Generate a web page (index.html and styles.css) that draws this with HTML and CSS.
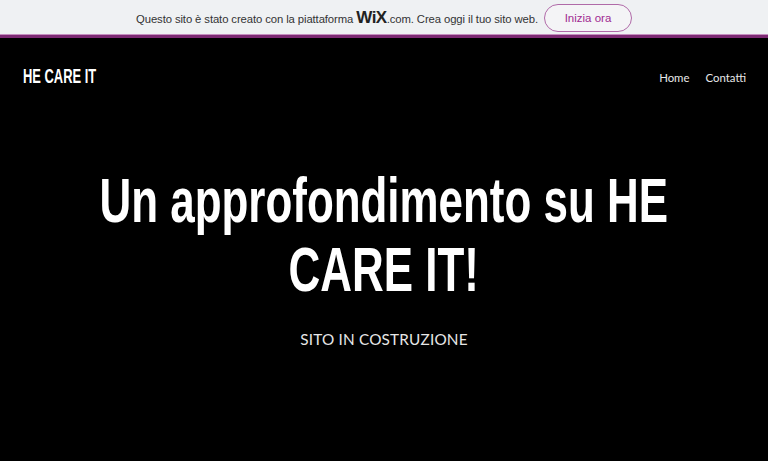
FILE: index.html
```html
<!DOCTYPE html>
<html lang="it">
<head>
<meta charset="utf-8">
<title>HE CARE IT</title>
<link rel="stylesheet" href="styles.css">
</head>
<body>
<div class="wixbar">
  <span class="wixtext">Questo sito è stato creato con la piattaforma <span class="wixlogo">WiX</span>.com. Crea oggi il tuo sito web.</span>
  <a class="wixbtn" href="#">Inizia ora</a>
</div>
<header class="site-header">
  <div class="logo">HE CARE IT</div>
  <nav class="nav">
    <a href="#">Home</a>
    <a href="#">Contatti</a>
  </nav>
</header>
<main class="hero">
  <h1 class="title"><span class="title-inner">Un approfondimento su HE<br>CARE IT!</span></h1>
  <p class="subtitle">SITO IN COSTRUZIONE</p>
</main>
</body>
</html>
```
FILE: styles.css
```css
html, body {
  margin: 0;
  padding: 0;
  background: #000;
  height: 100%;
}
body {
  font-family: "Liberation Sans", Arial, sans-serif;
  color: #fff;
  overflow: hidden;
}
.wixbar {
  height: 35px;
  background: #eff1f3;
  border-bottom: 3px solid #7d2a73;
  box-shadow: inset 0 -1px 0 #c68fc0;
  display: flex;
  align-items: center;
  justify-content: center;
  gap: 6px;
}
.wixtext {
  font-size: 11.3px;
  color: #333;
  letter-spacing: -0.1px;
}
.wixlogo {
  font-size: 17px;
  font-weight: bold;
  color: #222;
  letter-spacing: -0.5px;
}
.wixbtn {
  display: flex;
  align-items: center;
  justify-content: center;
  width: 86px;
  height: 26px;
  border: 1px solid #b06aa8;
  border-radius: 14px;
  color: #a02a92;
  font-size: 11.5px;
  text-decoration: none;
  background: #f4f4f6;
}
.site-header {
  display: flex;
  justify-content: space-between;
  align-items: center;
  padding: 0 22px 0 23px;
  height: 78px;
}
.logo {
  font-size: 19px;
  font-weight: bold;
  transform: scale(0.68, 1.03);
  transform-origin: left center;
}
.nav {
  display: flex;
  gap: 16px;
}
.nav a {
  font-family: Lato, sans-serif;
  font-weight: 400;
  color: #e8e8e8;
  text-decoration: none;
  font-size: 11.4px;
}
.hero {
  text-align: center;
  padding-top: 50px;
}
.title {
  margin: 0;
  font-weight: bold;
  font-size: 63px;
  line-height: 69px;
}
.title-inner {
  display: inline-block;
  margin: 0 -150px;
  transform: scaleX(0.697);
  transform-origin: center;
  white-space: nowrap;
}
.subtitle {
  margin: 26px 0 0;
  font-family: Lato, sans-serif;
  font-weight: 400;
  color: #e6e6e6;
  font-size: 15.3px;
  letter-spacing: 0.2px;
}
```
